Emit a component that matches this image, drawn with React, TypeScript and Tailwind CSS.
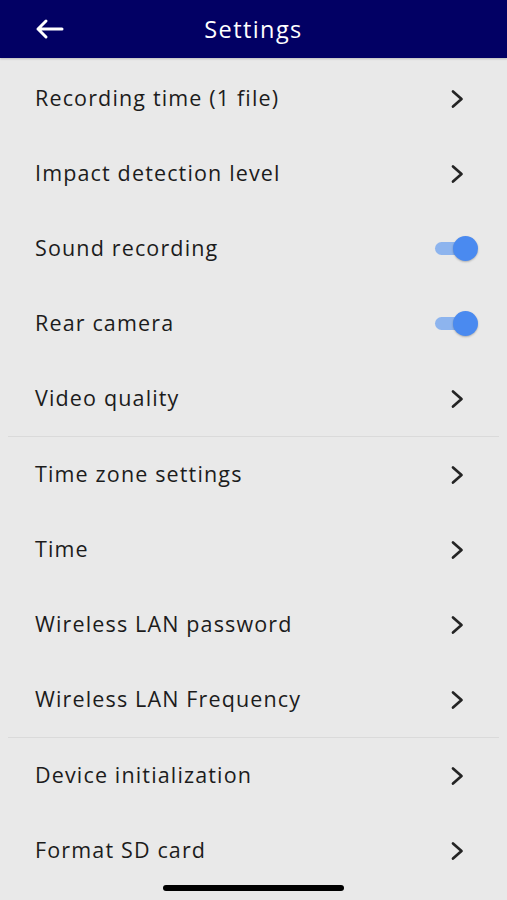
import React from "react";

type Item = { label: string; kind: "link" | "toggle" };

const groups: Item[][] = [
  [
    { label: "Recording time (1 file)", kind: "link" },
    { label: "Impact detection level", kind: "link" },
    { label: "Sound recording", kind: "toggle" },
    { label: "Rear camera", kind: "toggle" },
    { label: "Video quality", kind: "link" },
  ],
  [
    { label: "Time zone settings", kind: "link" },
    { label: "Time", kind: "link" },
    { label: "Wireless LAN password", kind: "link" },
    { label: "Wireless LAN Frequency", kind: "link" },
  ],
  [
    { label: "Device initialization", kind: "link" },
    { label: "Format SD card", kind: "link" },
  ],
];

function Chevron() {
  return (
    <svg width="16" height="22" viewBox="0 0 16 22" fill="none">
      <path d="M4 3.5l8.5 7.5-8.5 7.5" stroke="#242424" strokeWidth="2.7" strokeLinecap="round" strokeLinejoin="round" />
    </svg>
  );
}

function Toggle() {
  return (
    <div className="relative w-[43px] h-[25px] flex items-center">
      <div className="w-[36px] h-[13px] rounded-full bg-[#8db4ee]" />
      <div className="absolute right-0 top-0 w-[25px] h-[25px] rounded-full bg-[#4a8af0] shadow-[0_1px_2px_rgba(0,0,0,0.25)]" />
    </div>
  );
}

function Row({ item }: { item: Item }) {
  return (
    <div className="h-[75px] flex items-center justify-between pl-[35px] pr-[29px]">
      <span className="text-[21.5px] text-[#1c1c1c] tracking-[1.15px]">{item.label}</span>
      {item.kind === "toggle" ? <Toggle /> : <div className="pr-[13px]"><Chevron /></div>}
    </div>
  );
}

export default function App() {
  return (
    <div className="w-[507px] h-[900px] bg-[#e9e9e9] overflow-hidden relative" style={{ fontFamily: '"Open Sans", "Noto Sans", sans-serif' }}>
      <div className="h-[58px] bg-[#020064] flex items-center relative shadow-[0_1px_2px_rgba(0,0,0,0.2)]">
        <div className="absolute left-[34px] top-[17px]">
          <svg width="30" height="24" viewBox="0 0 30 24" fill="none">
            <path d="M28 12H4M12 4l-8 8 8 8" stroke="white" strokeWidth="3" strokeLinecap="round" strokeLinejoin="round" />
          </svg>
        </div>
        <h1 className="w-full text-center text-white text-[23.5px] tracking-[1.4px] pt-[2px]">Settings</h1>
      </div>
      <div className="pt-[3px]">
        {groups.map((g, gi) => (
          <div key={gi}>
            {gi > 0 && <div className="mx-[8px] h-px bg-[#dadada]" />}
            {g.map((it) => (
              <Row key={it.label} item={it} />
            ))}
          </div>
        ))}
      </div>
      <div className="absolute left-[163px] top-[885px] w-[181px] h-[6px] rounded-full bg-black" />
    </div>
  );
}
